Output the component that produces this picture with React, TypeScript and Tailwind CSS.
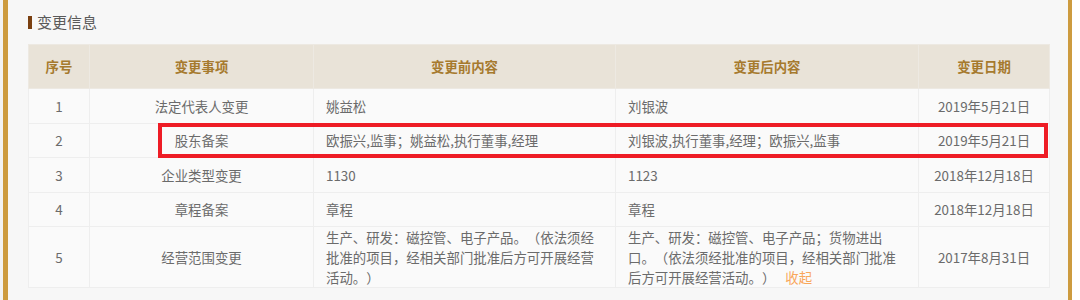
import React from "react";

const ROWS = [
  { no: "1", item: "法定代表人变更", before: "姚益松", after: "刘银波", date: "2019年5月21日" },
  { no: "2", item: "股东备案", before: "欧振兴,监事；姚益松,执行董事,经理", after: "刘银波,执行董事,经理；欧振兴,监事", date: "2019年5月21日" },
  { no: "3", item: "企业类型变更", before: "1130", after: "1123", date: "2018年12月18日" },
  { no: "4", item: "章程备案", before: "章程", after: "章程", date: "2018年12月18日" },
];

const font = { fontFamily: '"Noto Sans CJK SC", "Noto Sans", sans-serif' };

export default function App() {
  return (
    <div className="w-[1080px] h-[300px] bg-white overflow-hidden [text-spacing-trim:space-all]" style={font}>
      <div className="h-full pl-[3px] bg-[#f3f3f3] w-[1072px]">
        <div className="h-full border-l-[5px] border-r-[4px] border-[#cd9b3f] bg-[#f7f7f7] pl-[20px] pr-[19px] pt-[12px]">
          <div className="flex items-center h-[20px] mb-[12px]">
            <div className="w-[4px] h-[13px] bg-[#7a3f10] mr-[5px]" />
            <span className="text-[15px] leading-[20px] text-[#5a5a5a]">变更信息</span>
          </div>

          <div className="relative">
            <table className="w-[1021px] table-fixed border-collapse text-[13.4px] text-[#6b6b6b]">
              <colgroup>
                <col className="w-[61px]" />
                <col className="w-[224px]" />
                <col className="w-[302px]" />
                <col className="w-[303px]" />
                <col className="w-[131px]" />
              </colgroup>
              <thead>
                <tr className="h-[44px] bg-[#e9e3d8] text-[#a67a2e] font-bold">
                  <th className="border border-[#ede9e2] font-bold">序号</th>
                  <th className="border border-[#ede9e2] font-bold">变更事项</th>
                  <th className="border border-[#ede9e2] font-bold">变更前内容</th>
                  <th className="border border-[#ede9e2] font-bold">变更后内容</th>
                  <th className="border border-[#ede9e2] font-bold">变更日期</th>
                </tr>
              </thead>
              <tbody className="bg-[#fafafa]">
                {ROWS.map(r => (
                  <tr key={r.no} className="h-[34.5px]">
                    <td className="border border-[#eeeeee] text-center">{r.no}</td>
                    <td className="border border-[#eeeeee] text-center">{r.item}</td>
                    <td className="border border-[#eeeeee] px-[12px]">{r.before}</td>
                    <td className="border border-[#eeeeee] px-[12px]">{r.after}</td>
                    <td className="border border-[#eeeeee] text-center">{r.date}</td>
                  </tr>
                ))}
                <tr className="h-[61px]">
                  <td className="border border-[#eeeeee] text-center">5</td>
                  <td className="border border-[#eeeeee] text-center">经营范围变更</td>
                  <td className="border border-[#eeeeee] px-[12px] leading-[20px]">
                    生产、研发：磁控管、电子产品。（依法须经批准的项目，经相关部门批准后方可开展经营活动。）
                  </td>
                  <td className="border border-[#eeeeee] px-[12px] leading-[20px]">
                    生产、研发：磁控管、电子产品；货物进出口。（依法须经批准的项目，经相关部门批准后方可开展经营活动。）
                    <span className="ml-[10px] text-[#f9a75b] cursor-pointer">收起</span>
                  </td>
                  <td className="border border-[#eeeeee] text-center">2017年8月31日</td>
                </tr>
              </tbody>
            </table>
            <div className="absolute left-[130px] top-[79px] w-[890px] h-[35px] border-[4px] border-[#ee1c25] pointer-events-none" />
          </div>
        </div>
      </div>
    </div>
  );
}
